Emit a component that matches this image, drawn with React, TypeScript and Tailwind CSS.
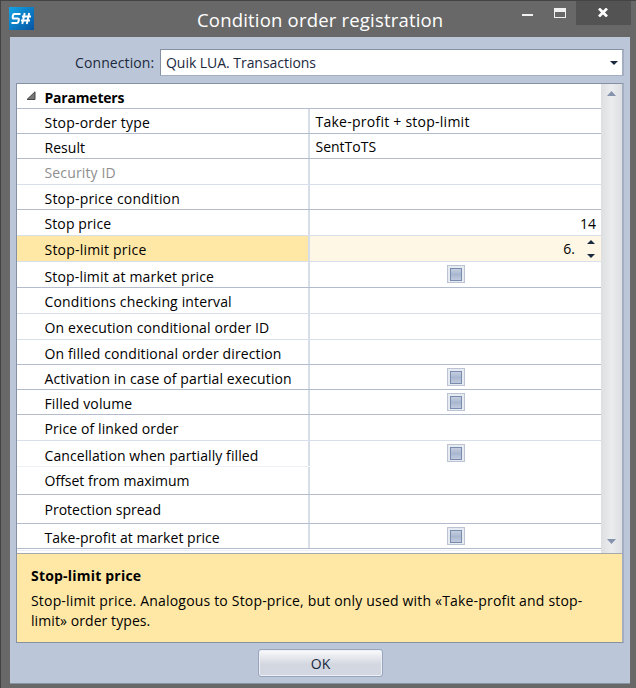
type Row = {
  label: string;
  h: string;
  pad?: string;
  track?: string;
  line?: string;
  value?: string;
  kind?: "check" | "number" | "spin";
};

const STRONG = "border-[#b3bccd]";
const SOFT = "border-[#d8deea]";

const rows: Row[] = [
  { label: "Stop-order type", h: "h-[25px]", track: "tracking-[0.2px]", value: "Take-profit + stop-limit" },
  { label: "Result", h: "h-[25px]", track: "tracking-[0.05px]", value: "SentToTS" },
  { label: "Security ID", h: "h-[26px]", track: "tracking-[0.14px]", line: SOFT },
  { label: "Stop-price condition", h: "h-[25px]", track: "tracking-[0.2px]" },
  { label: "Stop price", h: "h-[26px]", track: "tracking-[0.1px]", line: SOFT, kind: "number", value: "14" },
  { label: "Stop-limit price", h: "h-[26px]", track: "tracking-[0.2px]", line: SOFT, kind: "spin", value: "6." },
  { label: "Stop-limit at market price", h: "h-[26px]", pad: "pt-[5px]", track: "tracking-[0.16px]", kind: "check" },
  { label: "Conditions checking interval", h: "h-[26px]", track: "tracking-[0.14px]", line: SOFT },
  { label: "On execution conditional order ID", h: "h-[26px]", track: "tracking-[0.12px]", line: SOFT },
  { label: "On filled conditional order direction", h: "h-[25px]", track: "tracking-[0.12px]" },
  { label: "Activation in case of partial execution", h: "h-[25px]", track: "tracking-[0.12px]", kind: "check" },
  { label: "Filled volume", h: "h-[25px]", track: "tracking-[0.12px]", kind: "check" },
  { label: "Price of linked order", h: "h-[26px]", track: "tracking-[0.1px]", line: SOFT },
  { label: "Cancellation when partially filled", h: "h-[26px]", pad: "pt-[5px]", track: "tracking-[0.08px]", line: "border-[#edf0f5]", kind: "check" },
  { label: "Offset from maximum", h: "h-[28px]" },
  { label: "Protection spread", h: "h-[29px]", pad: "pt-[5px]" },
  { label: "Take-profit at market price", h: "h-[25px]", track: "tracking-[0.05px]", kind: "check" },
];

function Check() {
  return (
    <span className="mt-[3px] flex size-[18px] items-center justify-center border border-[#bcc4d3] bg-[#e6eaf1]">
      <span className="h-[13px] w-[12px] border border-[#7b8bb0] bg-linear-to-b from-[#c5cddf] via-[#a8b7d0] to-[#c2cbde]" />
    </span>
  );
}

function PropertyRow({ row }: { row: Row }) {
  const selected = row.kind === "spin";
  const line = row.line ?? STRONG;
  const valueLine = row.label.startsWith("Cancellation") ? "border-white" : line;
  return (
    <div className={`flex ${row.h}`}>
      <div
        className={`w-[291px] shrink-0 border-b pl-[27.5px] ${line} ${row.pad ?? "pt-1"} ${row.track ?? ""} ${
          selected ? "bg-[#ffe8a6]" : ""
        } ${row.label === "Security ID" ? "text-[#8e8e8e]" : ""}`}
      >
        {row.label}
      </div>
      <div className={`w-[2px] shrink-0 border-b bg-[#d8dee8] ${valueLine}`} />
      <div
        className={`flex flex-1 border-b ${valueLine} ${selected ? "bg-[#fff7e5]" : ""} ${
          row.kind === "check" ? "justify-center" : row.kind ? "justify-end" : ""
        }`}
      >
        {row.kind === "check" && <Check />}
        {!row.kind && row.value && (
          <span className={`pt-[3px] pl-[5.5px] ${row.value.startsWith("Take") ? "tracking-[0.25px]" : ""}`}>
            {row.value}
          </span>
        )}
        {row.kind === "number" && <span className="pt-1 pr-[5px]">{row.value}</span>}
        {selected && (
          <>
            <span className="pt-[3px] pr-[12px]">{row.value}</span>
            <svg className="mt-[4px] mr-[6px] h-[18px] w-[8px]" viewBox="0 0 8 18" fill="#1b293e">
              <path d="M0 4 4 0l4 4zM0 14h8l-4 4z" />
            </svg>
          </>
        )}
      </div>
    </div>
  );
}

export default function App() {
  return (
    <div className="flex h-[688px] w-[636px] flex-col border-t border-l border-[#444] bg-[#686868] pr-[6px] pl-[9px] font-['Open_Sans','Noto_Sans',sans-serif] text-[14px] leading-5 whitespace-nowrap text-black">
      <header className="flex h-[36px] shrink-0">
        <svg className="mt-[6px] -ml-px h-[23px] w-[25px] shrink-0" viewBox="0 0 25 23">
          <defs>
            <linearGradient id="logo" x1="0" y1="0" x2="1" y2="1">
              <stop offset="0" stopColor="#12a5e6" />
              <stop offset="1" stopColor="#0754a3" />
            </linearGradient>
          </defs>
          <rect width="25" height="23" fill="url(#logo)" />
          <g fill="none" stroke="#fff" strokeWidth="2.1">
            <path d="M11.500 7H5.400Q4.100 7 4 8.500L3.700 10q-.2 1.500 1 1.500h4q1.300 0 1.100 1.500l-.3 1.400Q9.200 16 8 16H2.500" />
            <path d="M15.700 6 13.300 17M20.200 6l-2.400 11M13 9.500h9M12 13.500h9" strokeWidth="1.900" />
          </g>
        </svg>
        <h1 className="ml-[163px] w-[250px] pt-[6px] text-[18.500px] leading-[26px] tracking-[0.19px] text-white">
          Condition order registration
        </h1>
        <div className="ml-auto flex">
          <svg className="h-[24px] w-[54px]" viewBox="0 0 54 24">
            <path d="M0 13h11v2H0z" fill="#f1f1f1" />
            <path d="M32 7h12v10H32zm1 4v5h10v-5z" fill="#f1f1f1" fillRule="evenodd" />
          </svg>
          <div className="-mr-px flex h-[24px] w-[55px] items-center justify-center bg-[#535353]">
            <svg className="-mt-px mr-px h-[9px] w-[10px]" viewBox="0 0 10 9" stroke="#fff" strokeWidth="2.700">
              <path d="M1 .5 9 8.500M9 .5 1 8.500" />
            </svg>
          </div>
        </div>
      </header>

      <main className="flex h-[647px] shrink-0 flex-col border-b border-[#8792a2] bg-[#bbc7d8] px-[6px] pt-[12px]">
        <div className="flex h-[27px] shrink-0 pl-[59px]">
          <label className="w-[85px] shrink-0 pt-[4px] tracking-[0.1px] text-[#1b293e]">Connection:</label>
          <div className="flex flex-1 justify-between border border-t-[#8591a2] border-r-2 border-r-[#a3afc1] border-b-[#a3afc1] border-l-[#8591a2] bg-white text-[#1b293e]">
            <span className="pt-[3px] pl-[5px] tracking-[-0.04px]">Quik LUA. Transactions</span>
            <svg className="mt-[11px] mr-[4px] h-[4px] w-[8px]" viewBox="0 0 8 4" fill="#1b293e">
              <path d="M0 0h8L4 4z" />
            </svg>
          </div>
        </div>

        <section className="mt-[7px] flex h-[560px] shrink-0 flex-col border border-t-[#8591a2] border-r-2 border-r-[#a3afc1] border-b-[#8591a2] border-l-[#8591a2] bg-white">
          <div className="flex h-[469px] shrink-0">
            <div className="flex w-[584px] shrink-0 flex-col">
              <div className="flex h-[25px] shrink-0 border-b border-[#b3bccd] pl-[9px] font-bold">
                <svg className="mt-[7px] h-[9px] w-[10px]" viewBox="0 0 10 9">
                  <path d="M1 8.500 9 .8v7.700z" fill="#777" stroke="#444" />
                </svg>
                <span className="pt-1 pl-[8.500px] tracking-[-0.2px]">Parameters</span>
              </div>
              {rows.map((r) => (
                <PropertyRow key={r.label} row={r} />
              ))}
              <div className="mt-px h-px bg-[#edf0f5]" />
            </div>
            <div className="flex flex-1 flex-col items-center justify-between bg-linear-to-r from-[#dedfe1] via-[#ebecee] to-[#dedfe2] pt-[7px] pb-[9px]">
              <svg className="h-[5px] w-[9px]" viewBox="0 0 9 5" fill="#8492ac">
                <path d="M0 5 4.500 0 9 5z" />
              </svg>
              <svg className="h-[5px] w-[9px]" viewBox="0 0 9 5" fill="#8492ac">
                <path d="M0 0h9L4.500 5z" />
              </svg>
            </div>
          </div>
          <div className="flex-1 border-t border-[#a3a9ad] bg-[#ffe8a6] pt-[12px] pl-[14px]">
            <div className="tracking-[0.2px] font-bold">Stop-limit price</div>
            <p className="mt-[5px] tracking-[0.18px]">
              Stop-limit price. Analogous to Stop-price, but only used with «Take-profit and stop-
              <br />
              <span className="tracking-[0.08px]">limit» order types.</span>
            </p>
          </div>
        </section>

        <button className="mt-[6px] ml-[242px] h-[28px] w-[125px] shrink-0 rounded-[3px] border border-[#98a5bd] bg-linear-to-b from-[#f7f8fa] from-5% via-[#d3d7e0] via-55% to-[#d2d7e2] pt-px text-[#1b293e] shadow-[inset_0_0_0_1px_#edf0f5]">
          OK
        </button>
      </main>
    </div>
  );
}
